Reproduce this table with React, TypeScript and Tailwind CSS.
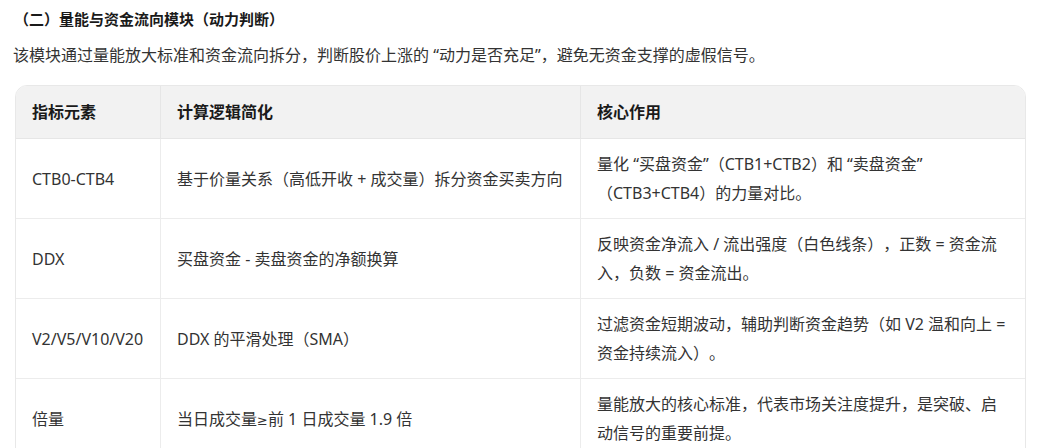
import React from 'react';

const rows: { name: string; logic: React.ReactNode; role: string[] }[] = [
  {
    name: 'CTB0-CTB4',
    logic: '基于价量关系（高低开收 + 成交量）拆分资金买卖方向',
    role: ['量化 “买盘资金”（CTB1+CTB2）和 “卖盘资金”', '（CTB3+CTB4）的力量对比。'],
  },
  {
    name: 'DDX',
    logic: '买盘资金 - 卖盘资金的净额换算',
    role: ['反映资金净流入 / 流出强度（白色线条），正数 = 资金流', '入，负数 = 资金流出。'],
  },
  {
    name: 'V2/V5/V10/V20',
    logic: 'DDX 的平滑处理（SMA）',
    role: ['过滤资金短期波动，辅助判断资金趋势（如 V2 温和向上 =', '资金持续流入）。'],
  },
  {
    name: '倍量',
    logic: (
      <>
        当日成交量<span className="font-['DejaVu_Sans',sans-serif] text-[13px]">≥</span>前 1 日成交量 1.9 倍
      </>
    ),
    role: ['量能放大的核心标准，代表市场关注度提升，是突破、启', '动信号的重要前提。'],
  },
];

const App: React.FC = () => {
  return (
    <div className="w-[1041px] h-[448px] overflow-hidden bg-white pt-[8px] font-['Noto_Sans','Noto_Sans_CJK_SC',sans-serif] text-[#333] [text-spacing-trim:space-all]">
      <h2 className="px-[14px] text-[15px] font-bold leading-[22px] text-[#1a1a1a]">（二）量能与资金流向模块（动力判断）</h2>
      <p className="mt-[14px] px-[13px] text-[16px] leading-[22px] text-[#333]">
        该模块通过量能放大标准和资金流向拆分，判断股价上涨的 “动力是否充足”，避免无资金支撑的虚假信号。
      </p>

      <div className="mx-[15px] mt-[19px] rounded-xl border border-[#e8e8e8] overflow-hidden">
        <div className="grid grid-cols-[145px_420px_1fr] text-[16px]">
          <div className="h-[53px] flex items-center px-4 bg-[#f2f2f2] border-b border-r border-[#e6e6e6] font-bold text-[#1a1a1a]">指标元素</div>
          <div className="h-[53px] flex items-center px-4 bg-[#f2f2f2] border-b border-r border-[#e6e6e6] font-bold text-[#1a1a1a]">计算逻辑简化</div>
          <div className="h-[53px] flex items-center px-4 bg-[#f2f2f2] border-b border-[#e6e6e6] font-bold text-[#1a1a1a]">核心作用</div>

          {rows.map((r) => (
            <React.Fragment key={r.name}>
              <div className="h-[80px] flex items-center px-4 border-b border-r border-[#ececec] whitespace-nowrap">{r.name}</div>
              <div className="h-[80px] flex items-center px-4 border-b border-r border-[#ececec] whitespace-nowrap">
                <span>{r.logic}</span>
              </div>
              <div className="h-[80px] flex flex-col justify-center px-4 border-b border-[#ececec] leading-[29px]">
                {r.role.map((line) => (
                  <span key={line} className="whitespace-nowrap">{line}</span>
                ))}
              </div>
            </React.Fragment>
          ))}
        </div>
      </div>
    </div>
  );
};

export default App;
